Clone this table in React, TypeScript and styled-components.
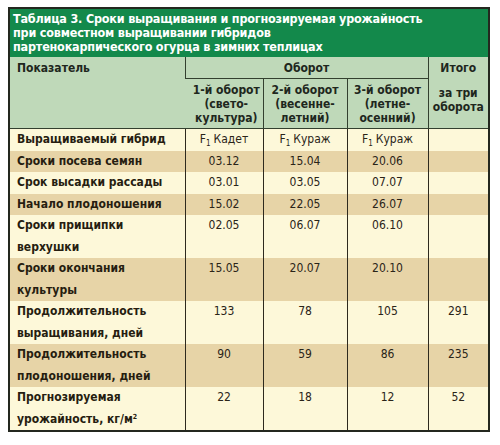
import { createGlobalStyle } from 'styled-components'
import styled from 'styled-components'

const GlobalStyle = createGlobalStyle`
  html, body {
    margin: 0;
    padding: 0;
    background: #ffffff;
  }
`

const Page = styled.div`
  padding: 7px 10px 0 8px;
  font-family: 'DejaVu Sans Condensed', 'DejaVu Sans', sans-serif;
`

const Frame = styled.div`
  width: 482px;
  border: 2px solid #24281f;
  box-sizing: border-box;
`

const Title = styled.div`
  background: #13894b;
  color: #ffffff;
  font-weight: bold;
  font-size: 12.5px;
  line-height: 14px;
  padding: 3px 4px 3px 3px;
  letter-spacing: -0.2px;
`

const Table = styled.table`
  width: 100%;
  border-collapse: collapse;
  table-layout: fixed;
`

const HeadCell = styled.th<{ $align?: string; $top?: boolean }>`
  background: #bfd9b9;
  color: #1e271d;
  font-weight: bold;
  font-size: 12px;
  line-height: 14px;
  text-align: ${({ $align }) => $align || 'center'};
  vertical-align: ${({ $top }) => ($top ? 'top' : 'middle')};
  border-left: 1px solid #33402f;
  border-bottom: 1px solid #33402f;
  padding: 4px 2px 3px;
  &:first-child {
    border-left: none;
    padding-left: 7px;
  }
`

const SubNote = styled.div`
  margin-top: 11px;
`

const Row = styled.tr<{ $tan?: boolean }>`
  background: ${({ $tan }) => ($tan ? '#e7d4a7' : '#fdf8d9')};
`

const Label = styled.td`
  color: #261d10;
  font-weight: bold;
  font-size: 12px;
  line-height: 21.5px;
  padding: 0 4px 0 7px;
  vertical-align: top;
`

const Value = styled.td`
  color: #2a2418;
  font-size: 12px;
  line-height: 21.5px;
  text-align: center;
  vertical-align: top;
  border-left: 1.5px solid #2e2a1e;
  padding: 0;
`

const Sub = styled.sub`
  font-size: 8px;
  vertical-align: -3px;
  line-height: 0;
  margin-right: 3px;
`

const Sup = styled.sup`
  font-size: 7px;
  vertical-align: 4px;
  line-height: 0;
`

type RowData = {
  label: React.ReactNode
  values: React.ReactNode[]
}

const hybrid = (name: string) => (
  <>
    F<Sub>1</Sub>
    {name}
  </>
)

const rows: RowData[] = [
  { label: 'Выращиваемый гибрид', values: [hybrid('Кадет'), hybrid('Кураж'), hybrid('Кураж'), ''] },
  { label: 'Сроки посева семян', values: ['03.12', '15.04', '20.06', ''] },
  { label: 'Срок высадки рассады', values: ['03.01', '03.05', '07.07', ''] },
  { label: 'Начало плодоношения', values: ['15.02', '22.05', '26.07', ''] },
  { label: <>Сроки прищипки<br />верхушки</>, values: ['02.05', '06.07', '06.10', ''] },
  { label: <>Сроки окончания<br />культуры</>, values: ['15.05', '20.07', '20.10', ''] },
  { label: <>Продолжительность<br />выращивания, дней</>, values: ['133', '78', '105', '291'] },
  { label: <>Продолжительность<br />плодоношения, дней</>, values: ['90', '59', '86', '235'] },
  {
    label: (
      <>
        Прогнозируемая
        <br />
        урожайность, кг/м<Sup>2</Sup>
      </>
    ),
    values: ['22', '18', '12', '52'],
  },
]

export default function App() {
  return (
    <Page>
      <GlobalStyle />
      <Frame>
        <Title>
          Таблица 3. Сроки выращивания и прогнозируемая урожайность
          <br />
          при совместном выращивании гибридов
          <br />
          партенокарпического огурца в зимних теплицах
        </Title>
        <Table>
          <colgroup>
            <col style={{ width: 175 }} />
            <col style={{ width: 78 }} />
            <col style={{ width: 84 }} />
            <col style={{ width: 81 }} />
            <col />
          </colgroup>
          <thead>
            <tr>
              <HeadCell rowSpan={2} $align="left" $top>
                Показатель
              </HeadCell>
              <HeadCell colSpan={3}>Оборот</HeadCell>
              <HeadCell rowSpan={2} $top>
                Итого
                <SubNote>
                  за три
                  <br />
                  оборота
                </SubNote>
              </HeadCell>
            </tr>
            <tr>
              <HeadCell>
                1-й оборот
                <br />
                (свето-
                <br />
                культура)
              </HeadCell>
              <HeadCell>
                2-й оборот
                <br />
                (весенне-
                <br />
                летний)
              </HeadCell>
              <HeadCell>
                3-й оборот
                <br />
                (летне-
                <br />
                осенний)
              </HeadCell>
            </tr>
          </thead>
          <tbody>
            {rows.map((row, i) => (
              <Row key={i} $tan={i % 2 === 1}>
                <Label>{row.label}</Label>
                {row.values.map((v, j) => (
                  <Value key={j}>{v}</Value>
                ))}
              </Row>
            ))}
          </tbody>
        </Table>
      </Frame>
    </Page>
  )
}
